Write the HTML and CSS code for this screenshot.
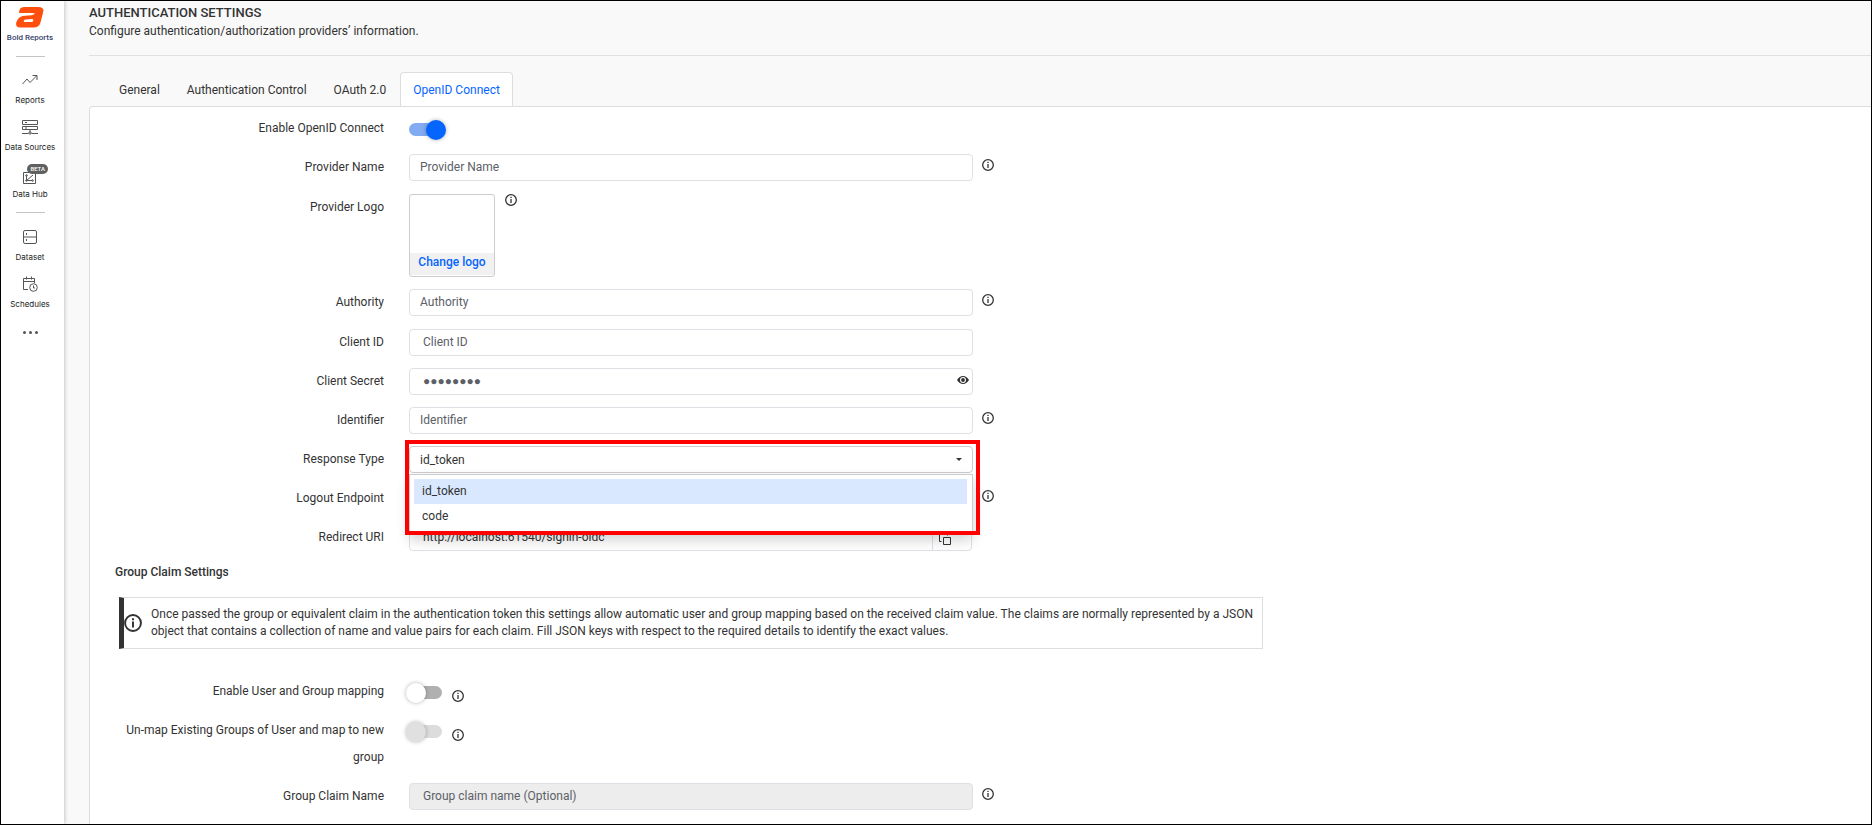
FILE: index.html
```html
<!DOCTYPE html>
<html lang="en">
<head>
<meta charset="utf-8">
<title>Authentication Settings</title>
<link rel="stylesheet" href="styles.css">
</head>
<body>
<svg class="sprite" aria-hidden="true">
  <symbol id="info" viewBox="0 0 12 12"><circle cx="6" cy="6" r="5.300" fill="none" stroke="currentColor" stroke-width="1.300"/><path d="M6 5v4M6 2.800v1.300" stroke="currentColor" stroke-width="1.300"/></symbol>
</svg>
<div class="app">
  <nav class="sidebar">
    <a class="brand" href="#">
      <svg width="28" height="21" viewBox="0 0 28 21"><path fill="#ff4f0f" fill-rule="evenodd" d="M8 0H22.500Q28.300 0 27.200 5L24.500 15.500Q23 20.500 18 20.500H4Q-.6 20.500.2 15.800Q1.500 10.500 6.500 9L15.500 8.200Q18.500 7.800 18.700 6.800Q18.700 6 17 6H3Q3 0 8 0ZM9.500 12.600Q8 12.900 7.800 14Q7.700 15 9 15H15.500Q17 15 17.300 13.500Q17.500 12 16 12Z"/></svg>
      <span>Bold Reports</span>
    </a>
    <hr class="rule">
    <a class="item" href="#"><svg width="16" height="16" viewBox="0 0 16 16"><path d="M.5 12l4.500-5 3 3.500L14.500 4M10.500 3.500H15V8"/></svg><span>Reports</span></a>
    <a class="item" href="#"><svg width="16" height="16" viewBox="0 0 16 16"><path d="M.5 1.500h15v4H.5zM.5 7.500h15v3H.5zM3 3.500h2M3 9h2M8 10.500v3M0 14.500h6.500M9.500 14.500H16"/><circle cx="8" cy="14" r="1.200"/></svg><span>Data Sources</span></a>
    <a class="item" href="#"><svg class="hub" width="16" height="16" viewBox="0 0 16 16"><path d="M13.500 6v9.500h-12v-11H7"/><path d="M4.500 7.500v5L11 7M4.500 12.500h6"/><circle cx="4.500" cy="7.500" r=".8"/><circle cx="4.500" cy="12.500" r=".8"/><circle cx="10.500" cy="12.500" r=".8"/></svg><b class="beta">BETA</b><span>Data Hub</span></a>
    <hr class="rule rule-low">
    <a class="item" href="#"><svg width="16" height="16" viewBox="0 0 16 16"><rect x="1.500" y="1.500" width="13" height="13" rx="1.500"/><path d="M1.500 8h13M4.500 4v2M4.500 10v2"/></svg><span>Dataset</span></a>
    <a class="item" href="#"><svg width="16" height="16" viewBox="0 0 16 16"><path d="M12.500 7V2.500h-11v11H6M1.500 5.500h11M4.500.5v3M9.500.5v3"/><circle cx="11.500" cy="11.500" r="3.800"/><path d="M11.500 9.500v2.500h1.500"/></svg><span>Schedules</span></a>
    <button class="more" type="button" aria-label="More"><i></i><i></i><i></i></button>
  </nav>
  <main class="main">
    <header class="head">
      <h1>AUTHENTICATION SETTINGS</h1>
      <p>Configure authentication/authorization providers’ information.</p>
    </header>
    <div class="tabs">
      <a class="tab" href="#">General</a>
      <a class="tab" href="#">Authentication Control</a>
      <a class="tab" href="#">OAuth 2.0</a>
      <a class="tab active" href="#">OpenID Connect</a>
    </div>
    <form class="panel">
      <div class="row">
        <label for="enable">Enable OpenID Connect</label>
        <input id="enable" class="switch" type="checkbox" checked>
      </div>
      <div class="row tall">
        <label for="pname">Provider Name</label>
        <input id="pname" class="field" type="text" placeholder="Provider Name">
        <svg class="info"><use href="#info"/></svg>
      </div>
      <div class="row">
        <label for="logo">Provider Logo</label>
        <div class="logo-cell">
          <div class="logo"><button id="logo" type="button">Change logo</button></div>
          <svg class="info info-logo"><use href="#info"/></svg>
        </div>
      </div>
      <div class="row tall">
        <label for="auth">Authority</label>
        <input id="auth" class="field" type="text" placeholder="Authority">
        <svg class="info"><use href="#info"/></svg>
      </div>
      <div class="row">
        <label for="cid">Client ID</label>
        <input id="cid" class="field inset" type="text" placeholder="Client ID">
      </div>
      <div class="row">
        <label for="secret">Client Secret</label>
        <div class="wrap">
          <input id="secret" class="field inset" type="text" placeholder="●●●●●●●●">
          <button class="eye" type="button" aria-label="Show secret"><svg width="12" height="8" viewBox="0 0 12 8"><path fill="#333" fill-rule="evenodd" d="M0 4Q2.500 0 6 0t6 4Q9.500 8 6 8T0 4Zm6-3a3 3 0 1 0 0 6a3 3 0 0 0 0-6Z"/><circle cx="6" cy="4" r="1.900" fill="#333"/></svg></button>
        </div>
      </div>
      <div class="row">
        <label for="ident">Identifier</label>
        <input id="ident" class="field" type="text" placeholder="Identifier">
        <svg class="info"><use href="#info"/></svg>
      </div>
      <div class="row">
        <label for="rtype">Response Type</label>
        <div class="wrap">
          <select id="rtype" class="field select"><option>id_token</option><option>code</option></select>
          <svg class="caret" width="6" height="3" viewBox="0 0 6 3"><path fill="#333" d="M0 0h6L3 3z"/></svg>
          <ul class="menu" role="listbox" aria-label="Response Type">
            <li role="option" aria-selected="true">id_token</li>
            <li role="option" aria-selected="false">code</li>
          </ul>
          <div class="highlight"></div>
        </div>
      </div>
      <div class="row">
        <label for="logout">Logout Endpoint</label>
        <input id="logout" class="field" type="text">
        <svg class="info"><use href="#info"/></svg>
      </div>
      <div class="row">
        <label for="uri">Redirect URI</label>
        <div class="copy">
          <input id="uri" class="field inset" type="text" value="http://localhost:61540/signin-oidc" readonly>
          <button type="button" aria-label="Copy"><svg width="12" height="12" viewBox="0 0 12 12"><path fill="none" stroke="#333" d="M4.500 4.500h7v7h-7zM2.500 8.500h-2v-8h8v2"/></svg></button>
        </div>
      </div>
      <h2>Group Claim Settings</h2>
      <div class="note">
        <svg width="18" height="18"><use href="#info"/></svg>
        <p>Once passed the group or equivalent claim in the authentication token this settings allow automatic user and group mapping based on the received claim value. The claims are normally represented by a JSON object that contains a collection of name and value pairs for each claim. Fill JSON keys with respect to the required details to identify the exact values.</p>
      </div>
      <div class="row">
        <label for="map">Enable User and Group mapping</label>
        <div class="toggle"><input id="map" class="switch" type="checkbox"><svg class="info"><use href="#info"/></svg></div>
      </div>
      <div class="row">
        <label for="unmap">Un-map Existing Groups of User and map to new group</label>
        <div class="toggle"><input id="unmap" class="switch" type="checkbox" disabled><svg class="info"><use href="#info"/></svg></div>
      </div>
      <div class="row">
        <label for="gname">Group Claim Name</label>
        <input id="gname" class="field inset" type="text" placeholder="Group claim name (Optional)" disabled>
        <svg class="info"><use href="#info"/></svg>
      </div>
    </form>
  </main>
</div>
</body>
</html>
```

FILE: styles.css
```css
* { box-sizing: border-box; }
body { margin: 0; font: 12px/18px Roboto, sans-serif; color: #333; }
a { color: inherit; text-decoration: none; }
button, input, select { font: inherit; color: inherit; }
button { border: 0; padding: 0; background: none; cursor: pointer; }
.sprite { position: absolute; width: 0; height: 0; }
.app { display: flex; min-height: 100vh; border: 1px solid #000; background: #f9f9f9; }

/* Sidebar */
.sidebar { flex: 0 0 63px; display: flex; flex-direction: column; align-items: center; gap: 13px; padding: 6px 5px 0 0; background: #fff; box-shadow: 1px 0 4px rgba(0, 0, 0, .2); }
.brand { display: flex; flex-direction: column; align-items: center; gap: 5px; font-size: 8px; line-height: 10px; font-weight: 500; color: #37436b; white-space: nowrap; }
.rule { width: 29px; margin: 0 0 2px; border: 0; border-top: 1px solid #c4c4c4; }
.rule-low { margin: -1px 0 3px; }
.item { position: relative; display: flex; flex-direction: column; align-items: center; gap: 6px; font: 8px/12px Inter, sans-serif; color: #222; white-space: nowrap; }
.item svg { fill: none; stroke: #555; stroke-width: 1; }
.item .hub { margin: 2px 0 -2px; }
.beta { position: absolute; top: -2px; left: 15px; padding: 0 3px; border-radius: 5px; background: #606060; color: #fff; font: 500 6px/10px Roboto, sans-serif; }
.more { display: flex; gap: 3px; padding: 8px 0; }
.more i { width: 3px; height: 3px; border-radius: 50%; background: #555; }

/* Page heading and tabs */
.main { flex: 1; min-width: 0; display: flex; flex-direction: column; padding-left: 25px; }
.head { padding: 2px 0 15px; border-bottom: 1px solid #e0e0e0; }
h1 { margin: 0; font-size: 13px; line-height: 20px; font-weight: 500; }
.head p { margin: 0; line-height: 17px; }
.tabs { display: flex; gap: 1px; margin-top: 16px; padding-left: 17px; }
.tab { padding: 1px 12px 0; border: 1px solid transparent; border-bottom: 0; line-height: 32px; }
.tab.active { margin-bottom: -1px; padding-bottom: 1px; border-color: #ddd; border-radius: 4px 4px 0 0; background: #fff; color: #0565ff; }

/* Form */
.panel { flex: 1; display: flex; flex-direction: column; gap: 12px; padding: 8px 25px 12px; border: 1px solid #ddd; border-width: 1px 0 0 1px; border-radius: 4px 0 0 0; background: #fff; }
.row { display: grid; grid-template-columns: 269px minmax(0, 589px) 21px; align-items: start; line-height: 27px; }
.row label { text-align: right; }
.row > :nth-child(2) { margin-left: 25px; }
.tall { min-height: 28px; }
.field { display: block; width: 100%; height: 27px; padding: 0 10px; border: 1px solid #dee0e5; border-radius: 4px; background: #fff; outline: 0; }
.row > .field { width: auto; }
.inset { padding: 0 13px; }
.field::placeholder { color: #5c6067; opacity: 1; }
.field:disabled { background: #ededed; }
.info { width: 12px; height: 12px; margin: 5px 0 0 9px; }
.info-logo { margin: 0 0 0 10px; }
.logo-cell { display: flex; }
.logo { display: flex; flex-direction: column; justify-content: flex-end; width: 86px; height: 83px; border: 1px solid #ccc; border-radius: 3px; }
.logo button { height: 22px; margin-bottom: 1px; padding-bottom: 4px; background: #f1f1f1; color: #0565ff; font-weight: 500; line-height: 18px; }
.wrap { position: relative; }
.eye { position: absolute; top: 0; right: 4px; height: 24px; display: flex; align-items: center; }
.copy { display: flex; width: 563px; max-width: 100%; border: 1px solid #dee0e5; border-radius: 4px; }
.copy .field { flex: 1; height: 25px; border: 0; }
.copy button { width: 39px; padding: 3px 0 0 6px; border-left: 1px solid #dee0e5; display: flex; align-items: center; }

/* Response type drop-down */
.select { appearance: none; border-color: #ccc; }
.caret { position: absolute; top: 12px; right: 11px; }
.menu { position: absolute; z-index: 1; top: 28px; left: 0; right: 0; margin: 0; padding: 4px 5px 4px 4px; border: 1px solid #ccc; background: #fff; list-style: none; line-height: 25px; box-shadow: 0 6px 12px rgba(0, 0, 0, .18); }
.menu li { padding: 0 8px; }
.menu li[aria-selected="true"] { background: #dae8ff; }
.highlight { position: absolute; z-index: 2; inset: -6px -7px -62px -4px; border: 4px solid #f00; pointer-events: none; }

/* Group claims */
h2 { margin: -4px 0 0; font-size: 12px; line-height: 27px; font-weight: 500; }
.note { display: flex; align-items: center; gap: 9px; width: 1144px; max-width: 100%; margin: -1px 0 17px 4px; padding: 8px 2px 8px 0; border: 1px solid #ddd; border-left: 5px solid #333; line-height: 17px; }
.note svg { flex: none; }
.note p { margin: 0; }

/* Switches */
.switch { position: relative; appearance: none; width: 33px; height: 13px; margin: 8px 0 0; border-radius: 7px; background: #b0b0b0; }
.switch::before { content: ""; position: absolute; top: -3px; left: -3px; width: 20px; height: 20px; border-radius: 50%; background: #fff; box-shadow: 0 0 4px rgba(0, 0, 0, .3); }
.switch:checked { background: #82abf1; }
.switch:checked::before { left: 17px; background: #0565ff; }
.switch:disabled { background: #dcdcdc; }
.switch:disabled::before { background: #e0e0e0; }
.toggle { display: flex; align-items: flex-start; }
.toggle .info { margin: 12px 0 0 10px; }
```
